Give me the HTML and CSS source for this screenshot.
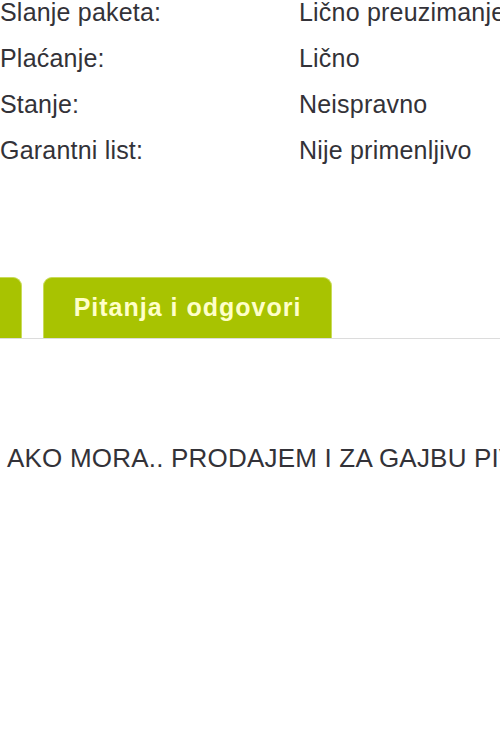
FILE: index.html
```html
<!DOCTYPE html>
<html lang="sr">
<head>
<meta charset="utf-8">
<title>Oglas</title>
<link rel="stylesheet" href="styles.css">
</head>
<body>
<div class="page">
  <div class="specs">
    <div class="row"><span class="label">Slanje paketa:</span><span class="value">Lično preuzimanje</span></div>
    <div class="row"><span class="label">Plaćanje:</span><span class="value">Lično</span></div>
    <div class="row"><span class="label">Stanje:</span><span class="value">Neispravno</span></div>
    <div class="row"><span class="label">Garantni list:</span><span class="value">Nije primenljivo</span></div>
  </div>
  <div class="tabs">
    <div class="tab tab-cut"></div>
    <div class="tab tab-qa">Pitanja i odgovori</div>
  </div>
  <div class="desc">AKO MORA.. PRODAJEM I ZA GAJBU PIVA</div>
</div>
</body>
</html>
```

FILE: styles.css
```css
html, body {
  margin: 0;
  padding: 0;
  background: #ffffff;
  overflow: hidden;
}
.page {
  width: 500px;
  height: 750px;
  overflow: hidden;
  font-family: "Liberation Sans", Arial, sans-serif;
  color: #333238;
}
.specs {
  margin-top: -11px;
}
.row {
  display: grid;
  grid-template-columns: 299px 1fr;
  height: 46px;
  line-height: 46px;
  font-size: 25px;
  letter-spacing: 0.2px;
  white-space: nowrap;
}
.tabs {
  display: flex;
  gap: 21px;
  margin-top: 104px;
  border-bottom: 1px solid #dcdcdc;
}
.tab {
  height: 61px;
  background: #a8c301;
  border-radius: 9px 9px 0 0;
  box-sizing: border-box;
  border: 1px solid #c9db5a;
  border-bottom: none;
}
.tab-cut {
  width: 40px;
  margin-left: -18px;
}
.tab-qa {
  width: 289px;
  color: #ffffc8;
  font-weight: bold;
  font-size: 25px;
  letter-spacing: 1px;
  line-height: 59px;
  text-align: center;
  white-space: nowrap;
}
.desc {
  margin-top: 104px;
  padding-left: 7px;
  font-size: 26px;
  line-height: 30px;
  letter-spacing: 0.2px;
  white-space: nowrap;
}
```
